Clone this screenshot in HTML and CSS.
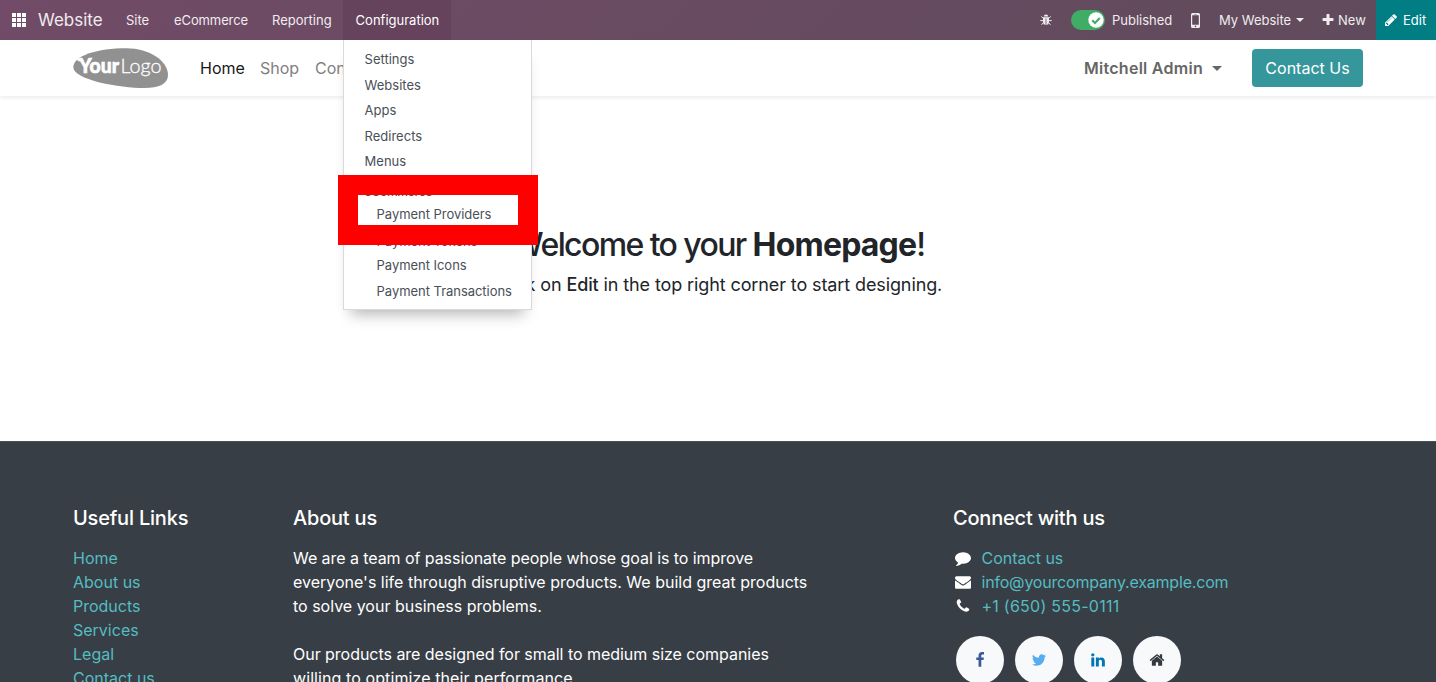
FILE: index.html
```
<!DOCTYPE html>
<html lang="en">
<head>
<meta charset="utf-8">
<title>Home | My Website</title>
<link rel="stylesheet" href="styles.css">
</head>
<body>
<div class="page">
  <header class="topbar">
    <svg class="apps" viewBox="0 0 14 14"><path d="M0 0h4v4H0zM5 0h4v4H5zM10 0h4v4h-4zM0 5h4v4H0zM5 5h4v4H5zM10 5h4v4h-4zM0 10h4v4H0zM5 10h4v4H5zM10 10h4v4h-4z"/></svg>
    <span class="brand">Website</span>
    <nav class="menu">
      <span class="menu-item w-site">Site</span>
      <span class="menu-item w-ecom">eCommerce</span>
      <span class="menu-item w-rep">Reporting</span>
      <div class="menu-item active">Configuration
        <div class="dropdown">
          <span class="dd">Settings</span>
          <span class="dd">Websites</span>
          <span class="dd">Apps</span>
          <span class="dd">Redirects</span>
          <span class="dd">Menus</span>
          <span class="dd-head">eCommerce</span>
          <span class="dd sub">Payment Providers</span>
          <span class="dd sub tokens">Payment Tokens</span>
          <span class="dd sub">Payment Icons</span>
          <span class="dd sub last">Payment Transactions</span>
          <div class="highlight"></div>
        </div>
      </div>
    </nav>
    <div class="systray">
      <svg class="bug" viewBox="0 0 12 12"><path d="M3.8 2.6a2.2 2.2 0 0 1 4.4 0z"/><path d="M3 3.3h6v4.9A2.9 2.9 0 0 1 6.400 11V4.600h-.8V11A2.900 2.900 0 0 1 3 8.200z"/><path d="M3.200 4.200 1.300 2.400M8.800 4.200l1.900-1.800M3 6.600H.3M9 6.600h2.700M3.400 8.700l-1.900 2.100M8.600 8.700l1.900 2.100" fill="none" stroke="currentColor" stroke-width="1"/></svg>
      <span class="toggle"><svg viewBox="0 0 16 16"><circle cx="8" cy="8" r="7.700" fill="#fff"/><path d="M4.200 8.200 7 10.900l4.700-4.800" fill="none" stroke="#40ad67" stroke-width="2.100"/></svg></span>
      <span class="published">Published</span>
      <svg class="mobile" viewBox="0 0 9 15"><path fill-rule="evenodd" d="M1.500 0h6A1.500 1.500 0 0 1 9 1.500v12A1.500 1.500 0 0 1 7.500 15h-6A1.500 1.500 0 0 1 0 13.500v-12A1.500 1.500 0 0 1 1.500 0zM1.200 2.300v9.400h6.600V2.300zM3.400.9v.5h2.200V.9zM4.500 12.600a.8.8 0 1 0 0 1.600.8.8 0 0 0 0-1.600z"/></svg>
      <span class="website">My Website</span>
      <span class="caret"></span>
      <svg class="plus" viewBox="0 0 1792 1792"><path d="M1600 736v192q0 40-28 68t-68 28h-416v416q0 40-28 68t-68 28h-192q-40 0-68-28t-28-68v-416h-416q-40 0-68-28t-28-68v-192q0-40 28-68t68-28h416v-416q0-40 28-68t68-28h192q40 0 68 28t28 68v416h416q40 0 68 28t28 68z"/></svg>
      <span class="new">New</span>
      <span class="edit"><svg viewBox="0 0 1792 1792"><path d="M491 1536l91-91-235-235-91 91v107h128v128h107zm523-928q0-22-22-22-10 0-17 7l-542 542q-7 7-7 17 0 22 22 22 10 0 17-7l542-542q7-7 7-17zm-54-192l416 416-832 832h-416v-416zm683 96q0 53-37 90l-166 166-416-416 166-165q36-38 90-38 53 0 91 38l235 234q37 39 37 91z"/></svg><span>Edit</span></span>
    </div>
  </header>

  <div class="site-header">
    <svg class="logo" viewBox="0 0 96 40"><path d="M.3 19C.5 7.500 25 .200 53 .200 77 .200 95 13 95 27c0 9-9 13-24 13C47 40 .2 32 .3 19z" fill="#919191"/><path d="M3.500 10.200h6l1 3H5z" fill="#fff"/><text x="6" y="25.300" class="logo-your" textLength="40" lengthAdjust="spacingAndGlyphs">Your</text><text x="47.500" y="25.300" class="logo-logo" textLength="41" lengthAdjust="spacingAndGlyphs">Logo</text></svg>
    <nav class="site-nav"><span class="current w-home">Home</span><span class="w-shop">Shop</span><span>Contact us</span></nav>
    <span class="user">Mitchell Admin</span>
    <span class="caret user-caret"></span>
    <span class="cta">Contact Us</span>
  </div>

  <main class="hero">
    <h1>Welcome to your <b>Homepage</b>!</h1>
    <p>Click on <span class="strong">Edit</span> in the top right corner to start designing.</p>
  </main>

  <footer class="footer">
    <div class="col">
      <h5>Useful Links</h5>
      <ul><li>Home</li><li>About us</li><li>Products</li><li>Services</li><li>Legal</li><li>Contact us</li></ul>
    </div>
    <div class="col about">
      <h5>About us</h5>
      <p><span class="tight">We are a team of passionate people whose goal is to improve</span><br>everyone's life through disruptive products. We build great products<br>to solve your business problems.</p>
      <p><span class="snug">Our products are designed for small to medium size companies</span><br><span class="loose">willing to optimize their performance.</span></p>
    </div>
    <div class="col">
      <h5>Connect with us</h5>
      <ul class="contact">
        <li><svg viewBox="0 0 1792 1792"><path d="M1792 896q0 174-120 321.500t-326 233-450 85.500q-70 0-145-8-198 175-460 242-49 14-114 22-17 2-30.500-9t-17.500-29v-1q-3-4-.5-12t2-10 4.500-9.500l6-9 7-8.500 8-9q7-8 31-34.500t34.500-38 31-39.500 32.500-51 27-59 26-76q-157-89-247.500-220t-90.500-281q0-130 71-248.500t191-204.500 286-136.500 348-50.500q244 0 450 85.500t326 233 120 321.500z"/></svg><span>Contact us</span></li>
        <li><svg viewBox="0 0 1792 1792"><path d="M1792 710v794q0 66-47 113t-113 47h-1472q-66 0-113-47t-47-113v-794q44 49 101 87 362 246 497 345 57 42 92.500 65.500t94.500 48 110 24.500h2q51 0 110-24.500t94.500-48 92.500-65.500q170-123 498-345 57-39 100-87zm0-294q0 79-49 151t-122 123q-376 261-468 325-10 7-42.500 31t-54 38.500-52 32.500-57.500 27-50 9h-2q-23 0-50-9t-57.500-27-52-32.500-54-38.500-42.500-31q-91-64-262-182.500t-205-142.500q-62-42-117-115.500t-55-136.500q0-78 41.500-130t118.500-52h1472q65 0 112.500 47t47.500 113z"/></svg><span class="mail">info@yourcompany.example.com</span></li>
        <li><svg viewBox="0 0 1792 1792"><path d="M1600 1240q0 27-10 70.500t-21 68.500q-21 50-122 106-94 51-186 51-27 0-53-3.500t-57.500-12.500-47-14.500-55.500-20.500-49-18q-98-35-175-83-127-79-264-216t-216-264q-48-77-83-175-3-9-18-49t-20.500-55.500-14.500-47-12.500-57.500-3.500-53q0-92 51-186 56-101 106-122 25-11 68.500-21t70.500-10q14 0 21 3 18 6 53 76 11 19 30 54t35 63.500 31 53.500q3 4 17.500 25t21.500 35.500 7 28.500q0 20-28.500 50t-62 55-62 53-28.500 46q0 9 5 22.500t8.500 20.500 14 24 11.500 19q76 137 174 235t235 174q2 1 19 11.500t24 14 20.500 8.500 22.500 5q18 0 46-28.500t53-62 55-62 50-28.500q14 0 28.500 7t35.500 21.500 25 17.500q25 15 53.500 31t63.500 35 54 30q70 35 76 53 3 7 3 21z"/></svg><span class="tel">+1 (650) 555-0111</span></li>
      </ul>
      <div class="social">
        <span class="fb"><svg viewBox="0 0 1792 1792"><path d="M1343 12v264h-157q-86 0-116 36t-30 108v189h293l-39 296h-254v759h-306v-759h-255v-296h255v-218q0-186 104-288.500t277-102.500q147 0 228 12z"/></svg></span>
        <span class="tw"><svg viewBox="0 0 1792 1792"><path d="M1684 408q-67 98-162 167 1 14 1 42 0 130-38 259.500t-115.500 248.500-184.500 210.500-258 146-323 54.500q-271 0-496-145 35 4 78 4 225 0 401-138-105-2-188-64.500t-114-159.500q33 5 61 5 43 0 85-11-112-23-185.500-111.500t-73.500-205.500v-4q68 38 146 41-66-44-105-115t-39-154q0-88 44-163 121 149 294.500 238.500t371.500 99.500q-8-38-8-74 0-134 94.500-228.500t228.500-94.500q140 0 236 102 109-21 205-78-37 115-142 178 93-10 186-50z"/></svg></span>
        <span class="li"><svg viewBox="0 0 1792 1792"><path d="M477 625v991h-330v-991h330zm21-306q1 73-50.500 122t-135.500 49h-2q-82 0-132-49t-50-122q0-74 51.500-122.500t134.500-48.500 133 48.500 51 122.500zm1166 729v568h-329v-530q0-105-40.500-164.500t-126.500-59.500q-63 0-105.500 34.500t-63.500 85.500q-11 30-11 81v553h-329q2-399 2-647t-1-296l-1-48h329v144h-2q20-32 41-56t56.500-52 87-43.500 114.500-15.500q171 0 275 113.500t104 332.500z"/></svg></span>
        <span class="hm"><svg viewBox="0 0 1792 1792"><path d="M1472 992v480q0 26-19 45t-45 19h-384v-384h-256v384h-384q-26 0-45-19t-19-45v-480q0-1 .5-3t.5-3l575-474 575 474q1 2 1 6zm223-69l-62 74q-8 9-21 11h-3q-13 0-21-7l-692-577-692 577q-12 8-24 7-13-2-21-11l-62-74q-8-10-7-23.500t11-21.500l719-599q32-26 76-26t76 26l244 204v-195q0-14 9-23t23-9h192q14 0 23 9t9 23v408l219 182q10 8 11 21.500t-7 23.500z"/></svg></span>
      </div>
    </div>
  </footer>
</div>
</body>
</html>
```

FILE: styles.css
```
* { box-sizing: border-box; }
body { margin: 0; overflow: hidden; font-family: Inter, "Liberation Sans", sans-serif; font-size: 16px; color: #212529; background: #fff; }
svg { display: block; flex: none; fill: currentColor; }
span { white-space: nowrap; }
h1, h5, p, ul { margin: 0; padding: 0; }
.page { height: 682px; overflow: hidden; display: flex; flex-direction: column; }

.topbar { flex: none; height: 40px; display: flex; align-items: center; padding-left: 12px; color: #f0ecef; font-size: 13px; background: linear-gradient(135deg, #714b67, #5f4b5b); }
.apps { width: 14px; height: 14px; color: #fff; }
.brand { width: 76px; margin-left: 12px; font-size: 17px; }
.menu { display: flex; height: 40px; }
.menu-item { line-height: 40px; padding-left: 12px; }
.w-site { width: 48px; }
.w-ecom { width: 98px; letter-spacing: -.1px; }
.w-rep { width: 83px; }
.active { position: relative; width: 108px; padding-left: 12.600px; color: #fff; background: #65435c; }
.dropdown { position: absolute; z-index: 2; top: 40px; left: .400px; width: 189px; height: 270px; padding-top: 7px; display: flex; flex-direction: column; background: #fff; border: 1px solid #d8dadd; border-top: 0; box-shadow: 0 12px 14px -8px rgba(0,0,0,.3); color: #495057; }
.dd { flex: none; height: 25.500px; line-height: 25.500px; padding-left: 20.200px; font-size: 13px; }
.sub { padding-left: 32.200px; letter-spacing: -.040px; }
.tokens { padding-top: 2px; }
.last { padding-top: .700px; }
.dd-head { flex: none; height: 27px; padding: 7px 0 0 20.200px; line-height: 20px; font-size: 12px; font-weight: 500; letter-spacing: -.250px; }
.highlight { position: absolute; left: -6px; top: 134.500px; width: 200px; height: 70px; border: 20px solid #f00; }
.systray { margin-left: auto; height: 40px; display: flex; align-items: center; }
.bug { width: 12px; height: 12px; margin-right: 19px; }
.toggle { width: 34px; height: 20px; border-radius: 10px; background: #40ad67; padding: 2px 1px 2px 17px; margin-right: 7px; }
.toggle svg { width: 16px; height: 16px; }
.published { width: 79px; }
.mobile { width: 9px; height: 15px; margin-right: 19px; }
.website { width: 77px; }
.caret { border-left: 4px solid transparent; border-right: 4px solid transparent; border-top: 4px solid currentColor; }
.plus { width: 14px; height: 14px; margin-left: 17px; }
.new { width: 38px; margin-left: 3px; }
.edit { height: 40px; width: 60px; padding-left: 8px; display: flex; align-items: center; color: #fff; background: #017e84; }
.edit svg { width: 14px; height: 14px; margin-right: 5px; }

.site-header { flex: none; height: 56px; padding: 0 73px; display: flex; align-items: center; box-shadow: 0 2px 4px rgba(0,0,0,.075); }
.logo { width: 96px; height: 40px; margin-right: 31px; }
.logo-your { font: 900 20px Lato, sans-serif; fill: #fff; stroke: #fff; stroke-width: .6px; }
.logo-logo { font: 300 20px Lato, sans-serif; fill: #fff; stroke: #fff; stroke-width: .3px; }
.site-nav { display: flex; color: #7f7f7f; }
.current { color: #191919; }
.w-home { width: 60px; }
.w-shop { width: 55px; }
.user { margin-left: auto; width: 127.500px; font-weight: 600; letter-spacing: .27px; color: #666; }
.user-caret { border-left-width: 5px; border-right-width: 5px; border-top-width: 5px; color: #666; }
.cta { width: 111px; height: 38px; line-height: 38px; text-align: center; margin-left: 30.500px; border-radius: 4px; color: #fff; background: #35979c; }

.hero { flex: none; height: 345px; padding-top: 130px; text-align: center; }
h1 { font-size: 32px; line-height: 38px; font-weight: 500; letter-spacing: -1.600px; }
h1 b { font-weight: 700; letter-spacing: -.800px; }
.hero p { margin-top: 7px; font-size: 18px; line-height: 28px; letter-spacing: -.110px; }
.strong { font-weight: 500; }

.footer { flex: 1; min-height: 0; padding: 64px 73px 0; display: grid; grid-template-columns: 220px 660px 1fr; color: #fff; background: #383e45; border-top: 1px solid #4b5056; }
.col { min-width: 0; }
h5 { font-size: 20px; line-height: 24px; font-weight: 500; letter-spacing: -.200px; margin-bottom: 16px; }
li { list-style: none; height: 24px; line-height: 24px; color: #55bcc1; }
.about p { line-height: 24px; margin-bottom: 24px; white-space: nowrap; }
.tight { letter-spacing: -.065px; }
.snug { letter-spacing: -.030px; }
.loose { letter-spacing: .090px; }
.contact li { display: flex; align-items: center; padding-left: 2px; }
.contact svg { width: 16px; height: 16px; margin-right: 10.500px; color: #fff; }
.mail { letter-spacing: -.190px; }
.tel { letter-spacing: .250px; }
.social { display: flex; gap: 11px; padding: 18px 0 0 3px; }
.social span { width: 48px; height: 48px; border-radius: 50%; background: #f8f9fa; display: flex; align-items: center; justify-content: center; }
.social svg { width: 16px; height: 16px; }
.fb { color: #3b5998; }
.tw { color: #55acee; }
.li { color: #0077b5; }
.hm { color: #343a40; }
```
